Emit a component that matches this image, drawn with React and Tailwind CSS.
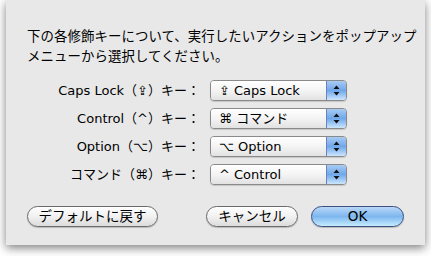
import React from "react";

const rows = [
  { label: "Caps Lock（⇪）キー：", value: "⇪ Caps Lock" },
  { label: "Control（^）キー：", value: "⌘ コマンド" },
  { label: "Option（⌥）キー：", value: "⌥ Option" },
  { label: "コマンド（⌘）キー：", value: "^ Control" },
];

function Arrows() {
  return (
    <svg width="7" height="11" viewBox="0 0 7 11">
      <path d="M3.5 0.5 L6.5 4 L0.5 4 Z" fill="#111" />
      <path d="M0.5 7 L6.5 7 L3.5 10.5 Z" fill="#111" />
    </svg>
  );
}

function Popup({ value }) {
  return (
    <div className="flex w-[137px] h-[21px] rounded-[4px] border border-[#8a8a8a] overflow-hidden shadow-[0_1px_1px_rgba(0,0,0,0.15)]">
      <div className="flex-1 flex items-center pl-[8px] bg-gradient-to-b from-white via-[#f4f4f4] to-[#e2e2e2] text-[13px] leading-none text-black">
        {value}
      </div>
      <div className="w-[20px] flex items-center justify-center border-l border-[#6d84b8] bg-gradient-to-b from-[#a9cbf3] via-[#6fa7ea] to-[#cbe6fd]">
        <Arrows />
      </div>
    </div>
  );
}

function Button({ children, width, blue }) {
  return (
    <button
      className={`h-[21px] ${width} rounded-full border text-[13.5px] leading-none text-black flex items-center justify-center shadow-[0_1px_1px_rgba(0,0,0,0.2)] ${
        blue
          ? "border-[#3c4f80] bg-gradient-to-b from-[#b9d7f7] via-[#7db6ef] to-[#c6ecfd]"
          : "border-[#6b6b6b] bg-gradient-to-b from-white via-[#f1f1f1] to-[#dcdcdc]"
      }`}
    >
      {children}
    </button>
  );
}

export default function App() {
  return (
    <div
      className="w-[431px] h-[256px] bg-white overflow-hidden"
      style={{ fontFamily: '"DejaVu Sans", "Noto Sans CJK JP", sans-serif' }}
    >
      <div className="ml-[6px] w-[419px] h-[245px] bg-[#e8e8e8] shadow-[0_3px_9px_rgba(0,0,0,0.5)] pl-[21px] pt-[27px] flex flex-col">
        {/* Message */}
        <p className="text-[13.4px] leading-[20px] text-black tracking-[0.1px]">
          下の各修飾キーについて、実行したいアクションをポップアップ
          <br />
          メニューから選択してください。
        </p>

        {/* Modifier rows */}
        <div className="mt-[13px] flex flex-col gap-[7px]">
          {rows.map((r) => (
            <div key={r.label} className="flex items-center gap-[10px]">
              <div className="w-[173px] text-right text-[13px] leading-none text-black whitespace-nowrap">
                {r.label}
              </div>
              <Popup value={r.value} />
            </div>
          ))}
        </div>

        {/* Buttons */}
        <div className="mt-[21px] flex items-center">
          <Button width="w-[131px]">デフォルトに戻す</Button>
          <div className="flex-1" />
          <div className="flex items-center gap-[13px] mr-[21px]">
            <Button width="w-[92px]">キャンセル</Button>
            <Button width="w-[93px]" blue>
              OK
            </Button>
          </div>
        </div>
      </div>
    </div>
  );
}
